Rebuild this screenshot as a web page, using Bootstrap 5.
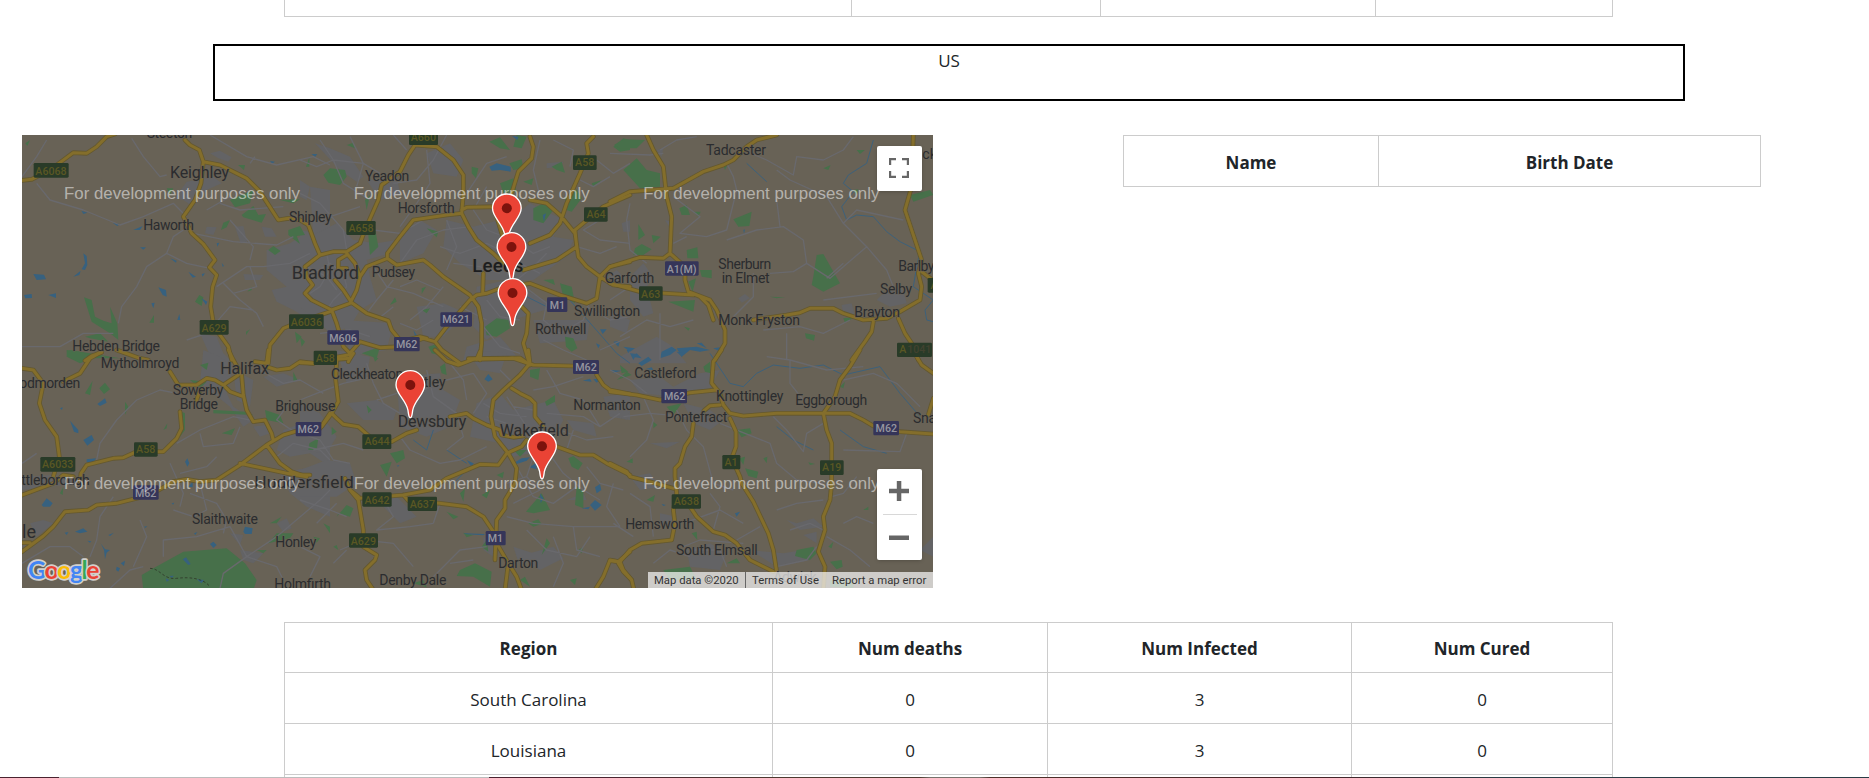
<!DOCTYPE html>
<html lang="en">
<head>
<meta charset="utf-8">
<meta name="viewport" content="width=device-width, initial-scale=1">
<title>Regions</title>
<link href="https://cdn.jsdelivr.net/npm/bootstrap@5.3.0/dist/css/bootstrap.min.css" rel="stylesheet">
<style>
html,body{height:778px;overflow:hidden}
body{font:400 17px/27px "Open Sans","Noto Sans",sans-serif;color:#212529;background:#fff}
.page{height:777px;overflow:hidden;padding-left:28px}
.grid-table{border-collapse:collapse;table-layout:fixed;text-align:center}
.grid-table th,.grid-table td{border:1px solid #ccc;height:51px;padding:3px 12px 0;vertical-align:middle}
.grid-table th{font-weight:700}
.stats{width:1329px;margin:0 auto 0 256px}
.stats tr.lead-row th{height:50px}
.stats.prev td{height:16px;border-top:0}
.region-box{width:1472px;height:57px;margin:27px auto 34px 185px;border:2px solid #000;line-height:27px;padding-top:1px}
.map-box{width:911px;height:453px;margin-left:-6px;overflow:hidden;background:#686256}
.map-box>svg{display:block}
.people{width:638px;margin:0 0 0 190px}
.people th{height:51px}
.map-ctl{background:#fff;border:0;border-radius:2px;width:45px;box-shadow:0 1px 4px -1px rgba(0,0,0,.3);right:11px}
.ctl-full{top:11px;height:45px}
.ctl-zoom{bottom:28px;height:91px}
.map-ctl button{width:45px;height:45px;border:0;background:none;padding:0 1px 0 0}
.map-ctl hr{width:34px;margin:0 auto;border-top:1px solid #d8d8d8;opacity:1}
.attrib{right:0;bottom:0;height:16px;width:285px;background:rgba(245,245,245,.72);font:11.3px/18px Roboto,sans-serif;color:#333;white-space:nowrap}
.attrib span:first-child{width:98px;border-right:1px solid #666;padding-left:6px}
.attrib span:nth-child(2){padding-left:6px;width:86px}
.strip{height:1px;background:linear-gradient(90deg,#4a2330 0 59px,#bcbcbc 59px 489px,#4a2330 489px 600px,#4d3930 780px 920px,#77706a 930px 980px,#4d3029 990px,#462327 1320px,#293c45 1500px)}
.green{fill:#47704a}.water{fill:#37617f}.town{fill:#636365}
.lane{fill:none;stroke:#69696d;stroke-width:4;stroke-linejoin:round}
.stream{fill:none;stroke:#3d617b;stroke-width:3}
.road{fill:none;stroke-linejoin:round;stroke-linecap:round}
.casing{stroke:#64582f;stroke-width:14}
.core{stroke:#846e2b;stroke-width:9}
.names text{font-family:Roboto,sans-serif;font-size:42px;fill:#2b2c2f;stroke:#686256;stroke-width:3;paint-order:stroke}
.shields rect{rx:4px}
.shields text{font:500 32px Roboto,sans-serif;text-anchor:middle}
.sa rect{fill:#293b28}.sa text{fill:#5a5724}
.sm rect{fill:#353559}.sm text{fill:#96959f}
.dev text{font:50.5px "Liberation Sans",Arial,sans-serif;fill:#fff;fill-opacity:.52}
</style>
</head>
<body>
<div class="page">
  <table class="grid-table stats prev">
    <colgroup><col style="width:567px"><col style="width:249px"><col style="width:275px"><col></colgroup>
    <tbody><tr><td></td><td></td><td></td><td></td></tr></tbody>
  </table>
  <div class="region-box text-center">US</div>

  <div class="d-flex align-items-start">
    <div class="map-box position-relative flex-shrink-0">
      <svg width="911" height="453" viewBox="66 45 2733 1359">
        <defs>
          <path id="pin" d="M0,98C-5,98-5,91-7,76C-13,45-43,27-43,0A43,43 0 1 1 43,0C43,27 13,45 7,76C5,91 5,98 0,98Z" fill="#ea4335" stroke="#fff" stroke-width="4"/>
          <g id="roads">
            <path d="M60,182L95,178L150,150L220,98L260,100L290,80L320,50L345,42M555,60L570,75L598,90L610,125L660,135L740,175L780,215L835,300L865,295L900,300M610,125L603,190L585,240L550,290L575,340L610,372L645,420L628,442L650,465L638,500L632,560L642,620L685,680L695,720M990,575L900,605L850,625L810,675L805,730M255,722L275,708L305,697M350,690L420,715"/>
            <path transform="translate(900 0)" d="M0,300L25,315L45,370L60,405L15,440L20,470L38,495L15,520L35,540L95,570L150,550L170,510L180,470L200,440L262,415M345,75L325,105L300,155L245,195L235,240L215,285L195,330L180,370L140,395L100,395L60,405M345,75L410,80L460,120L490,165L490,220L485,280L505,320L530,360L580,400L610,430M485,270L500,262L590,260M485,280L440,285L340,300L300,350L262,400L262,415L290,435L370,420L390,435L430,470L510,525L535,560L545,610L545,670L540,720M140,400L165,430L180,470M140,405L115,420L115,445L140,445M105,480L130,510L155,548L200,580L265,602L275,630L300,660M95,570L110,610L130,680L155,705L145,725M90,715L145,705L180,665L240,683L300,680L370,655L405,665L425,690L480,730M380,655L360,650L300,665M405,665L440,620L510,540L530,525L560,520L600,505L690,490L780,525L860,550L890,535L900,470L930,440L990,425M690,50L700,80L695,115L655,155L635,220M880,50L860,70L865,100L840,160L800,250L780,310L750,345L690,370M990,225L910,260L825,330L830,380L770,420L670,450M690,240L740,250L780,285L825,340L835,410L860,440L900,470L940,495L990,500M550,460L548,520M590,290L605,340L625,400M640,540L665,560L685,580L680,640L670,670L685,720M505,716L660,714L690,735"/>
            <path transform="translate(1830 0)" d="M110,45L130,90L160,140L170,230L185,290L180,400L225,440L225,480L235,515L270,530L295,555L310,600M235,515L300,540L320,570L345,630L345,670L315,720M500,45L440,60L410,80L370,120L340,135L280,155L190,205L60,215L0,245M0,440L90,412L160,415L180,400M0,490L90,515L250,525M430,600L530,585L570,578L600,565L670,565L700,580L760,600L830,595L870,575L930,540L935,500L925,460L935,420L910,345L885,270L905,200L910,45M935,455L980,490M790,605L785,635L765,665L725,720M865,595L885,640L905,670L925,720"/>
            <path transform="translate(0 690)" d="M66,55L100,60L130,100L118,160L135,210L170,260L178,320L160,380M190,95L240,70L270,25L305,5M420,25L445,30M510,65L535,105L590,105L620,85L645,90L670,105L690,125L730,140M685,0L700,30L725,75L730,135L740,180L760,215L795,210L815,250L820,272L800,285M670,105L715,75M805,0L800,40L765,35M800,50L830,60L870,55L900,35L940,40M590,150L600,120M540,185L545,235L530,265L490,305L410,305L370,323L340,325L260,345L243,370L240,395M220,380L190,375L160,400L66,435M66,605L130,558L160,530L195,485L265,480L290,465L350,460L450,435L520,395L560,388L600,395L650,390L720,345L800,285L850,255L900,240L960,235L990,190M800,285L840,340L875,365L920,380M720,340L860,370L920,380M66,578H90"/>
            <path transform="translate(900 690)" d="M160,10L150,25L110,28L107,90L115,155L95,190L65,230M95,190L110,205L130,223L175,230L215,265L275,275L320,250L350,240M0,38L40,40M405,0L440,33L475,45L520,28L640,25L700,45L820,48M540,5L530,28M685,0L690,40L660,75L610,120L580,150L573,200L585,260L625,310L650,355L645,400L615,450L615,475L590,510L585,630M635,115L660,130L690,145L705,160L705,200L730,230M680,270L665,290L620,310L595,345L540,343L500,360L440,385L390,420L310,435L180,445M450,200L500,190L520,205L560,225L600,240L605,255L640,262L670,258M770,290L840,315L880,315L920,340L990,375M890,75L910,105L930,120L990,132M310,435L325,452L420,460L500,470L550,500L580,545M135,385L150,420L175,450L190,540L190,590L230,615L225,630L195,660L200,690L220,720M150,420L175,440M0,375L30,375M590,580L625,640L615,720M625,640L650,680L665,720M990,605L955,635L930,630L910,680L885,720M955,640L970,665L995,690"/>
            <path transform="translate(1830 690)" d="M0,125L80,135L150,150L240,128L320,120M335,0L310,35L305,100L330,130L340,165L360,190L400,198L500,190L640,190L720,190L760,210L790,228L870,245L970,252M330,165L300,167L282,182M250,220L245,260L225,290L210,340L195,355L195,380L200,430L190,480L195,520L185,570L95,580L60,600L30,635L40,660L65,690L72,720M30,635L0,632M360,205L378,245L378,290L365,325L390,380L395,400L430,455L475,550L490,600L500,665M750,0L720,50L690,90L675,140L640,190L650,240L665,280L665,400L660,450L640,500L645,540L625,605L645,650L640,720M0,340L50,365L60,380L100,390L190,415M200,440L240,470L260,500L310,545L345,555L380,580L420,630L490,665M920,20L935,45L970,70M970,145L955,195"/>
          </g>
        </defs>

        <g class="town">
          <path d="M630,100L660,92L695,112L685,125L655,115ZM525,235L560,185L640,170L665,190L620,210L580,260L550,240ZM620,320L650,322L640,345L615,340ZM705,320L730,318L742,368L722,370ZM785,320L815,325L830,350L795,350ZM730,462L790,465L780,480L735,480ZM800,390L870,370L900,350L950,340L990,330L990,590L930,600L880,570L830,545L815,510L860,500L800,450ZM600,640L650,650L670,700L700,730L640,730ZM930,200L990,210V340L940,350Z"/>
          <path transform="translate(900 0)" d="M0,330L50,340L110,310L160,360L230,370L290,360L270,400L200,420L210,470L230,540L180,570L150,620L90,640L40,590L0,560ZM45,70L90,85L150,110L190,170L170,185L120,150ZM200,180L290,170L300,220L240,240ZM0,180L30,200L20,240L0,230ZM300,350L360,300L410,330L370,400L300,430ZM440,300L520,320L640,290L690,250L750,280L790,300L760,350L820,360L800,410L700,480L560,480L480,430L430,380ZM380,100L450,70L490,120L470,170L400,160ZM530,500L620,480L770,560L700,580L640,600L560,660L520,620ZM350,560L430,550L500,580L430,650L370,650ZM130,600L280,610L260,690L150,710ZM740,130L790,125L780,140L740,145ZM910,480L950,450L970,470L940,500ZM700,600L870,600L860,660L720,670ZM500,680L600,650L660,720L490,720Z"/>
          <path transform="translate(1830 0)" d="M35,310L60,300L60,335L40,335ZM140,90L160,85L155,110ZM165,300L185,305L180,325ZM60,470L100,430L130,470L110,500L130,580L100,590L60,540ZM385,535L405,522L420,535L395,548ZM800,540L840,500L880,510L890,550L840,560ZM695,555L725,550L735,590L700,580ZM0,570L60,600L50,640L0,620ZM30,710L140,650L190,680L230,730H30Z"/>
          <path transform="translate(0 690)" d="M610,0L660,20L700,50L680,130L700,170L760,210L730,230L690,170L640,130L600,100ZM700,60L760,90L750,170L710,150ZM760,230L800,225L810,250L780,260ZM850,240L960,200L990,230L990,350L930,310L870,320L830,300ZM840,370L990,340L990,500L920,470L870,430ZM690,550L730,555L720,585ZM830,520L860,505L875,535L850,545ZM720,600L790,610L760,640L730,630ZM90,520L130,510L160,520L110,560ZM66,380L160,375L260,385L240,400L66,420ZM790,80L850,70L900,90L830,110Z"/>
          <path transform="translate(900 690)" d="M110,0L210,20L200,80L140,100ZM290,80L420,70L430,120L480,150L450,230L380,260L300,230ZM0,160L60,190L110,260L80,310L0,300ZM140,160L230,150L290,180L280,210L190,210ZM0,360L80,330L150,340L170,400L110,440L0,440ZM530,160L600,130L640,180L760,150L790,210L740,300L640,320L600,280L510,260ZM800,210L880,220L890,260L820,240ZM500,0L620,10L600,70L540,60ZM220,440L280,430L350,500L300,520ZM550,560L600,590L580,620L550,600ZM650,620L760,590L790,625L720,660ZM910,140L990,130V210L930,200ZM800,450L850,430L860,450ZM640,590L700,610L660,650Z"/>
          <path transform="translate(1830 690)" d="M60,90L150,80L190,110L270,70L330,60L300,115L200,140L90,130ZM0,150L60,180L50,210L0,190ZM120,280L210,275L170,295ZM220,160L300,180L340,210L300,240L250,220ZM230,600L300,580L350,610L330,660L240,650ZM420,600L520,610L580,600L600,630L500,650ZM60,380L120,370L150,410L90,420ZM530,510L560,520L610,505L640,530L570,540ZM150,490L200,500L190,530L150,520ZM580,555L620,545L620,580ZM930,600L970,560V620Z"/>
        </g>

        <g class="green">
          <path d="M76,70L90,60L82,78ZM714,135L735,135L732,150ZM918,140L928,112V140ZM725,285L760,258L775,285L798,282L785,308L730,292ZM663,330L670,308L690,300L680,322ZM865,330L900,318L915,345L890,348L900,372L865,345ZM805,390L820,378L842,393L825,405ZM585,545L598,525L610,532L605,558ZM252,532L275,540L285,590L310,602L335,610L330,560L352,610L355,660L330,640L275,605ZM255,650L300,640L325,665L270,655ZM690,240L760,210L750,250L705,262ZM840,240L900,238L880,250ZM738,635L750,628L738,645ZM885,635L905,650L890,670ZM448,608L462,585L462,608ZM500,205L520,205L510,225ZM742,515L755,500V510ZM208,690L270,700L360,715L220,715Z"/>
          <path transform="translate(900 0)" d="M70,165L90,145L135,150L140,170L120,195L85,188ZM140,75L160,68L165,85ZM568,65L600,52L630,90L600,85ZM640,80L665,85L680,50L650,45ZM628,130L665,118L670,145L640,150ZM515,140L535,145L528,175L515,160ZM755,140L785,125L795,158L770,150ZM795,235L830,208L845,235L815,275L800,270ZM700,265L730,250L760,270L730,310L700,300ZM670,185L700,175L695,195ZM205,345L225,325L235,380L210,405ZM380,325L415,335L410,352ZM555,620L590,595L625,600L630,625L590,650L560,645ZM780,490L815,500L825,550L790,530ZM795,650L820,655L832,685L815,695L798,680ZM270,555L285,532L290,545ZM365,505L378,500L365,522ZM185,700L240,680L230,715ZM940,80L970,55L990,60L990,90L960,95ZM730,480L760,478L765,495ZM875,190L905,180L880,200ZM365,570L390,565L380,580ZM385,680L410,672L415,705L395,700ZM0,650L15,665L5,680ZM195,240L210,225L200,270ZM600,190L640,175L650,215L610,220Z"/>
          <path transform="translate(1830 0)" d="M12,75L40,58L105,60L80,85L30,85ZM40,150L80,115L110,150L150,160L150,200L90,205ZM85,312L105,345L85,360ZM75,385L95,372L125,388L100,405L70,405ZM125,345L152,350L130,370ZM230,390L262,382L265,415L232,415ZM270,450L305,450V475L275,470ZM208,265L230,255L240,285L215,285ZM370,298L425,275L418,318L385,320ZM610,470L620,405L640,402L690,490L640,515L605,495ZM585,640L615,645L612,662L588,655ZM175,545L255,540L250,575ZM235,485L258,475L248,515ZM900,225L960,210L970,225L910,245ZM640,145L662,135L655,150ZM700,595L735,590L705,608ZM730,210L745,208L740,225ZM740,90L765,90L750,102ZM340,135L355,130L345,150ZM250,275L272,275L265,290ZM222,620L240,625L235,632ZM480,530L525,532L500,535Z"/>
          <path transform="translate(0 690)" d="M425,675L460,655L550,605L680,595L735,640L770,690L760,720H430ZM298,115L315,98L330,118L312,132ZM200,0L240,5L290,20L240,40L200,20ZM640,180L740,185L760,195L640,190ZM795,180L840,195L850,220L800,210ZM545,185L555,190V240L540,260ZM570,90L620,95L600,115ZM665,250L705,235L695,255ZM600,45L625,38L620,60ZM375,155L385,170L375,195ZM490,240L502,220L500,235ZM928,280L955,265L950,300L925,300ZM805,580L830,550L880,550L870,565ZM180,430L190,410L188,435ZM810,520L845,500L830,520ZM940,560L960,565L950,578ZM970,520L990,530V550ZM770,600L800,600L790,610ZM255,130L278,92L270,135ZM880,65L892,90L880,95Z"/>
          <path transform="translate(900 690)" d="M420,50L435,40L440,75L425,70ZM690,60L720,55L715,90L690,80ZM735,155L765,135L765,155L740,168ZM805,325L820,318L848,340L835,360L815,350ZM678,485L725,430L750,480L700,490ZM830,410L850,425L850,475L825,465ZM685,520L715,508L725,522L700,530ZM725,615L740,565L750,580ZM480,660L525,640L575,665L570,710L520,680L470,678ZM110,500L140,465L160,475L150,500L115,490ZM270,310L310,300L315,325L290,340ZM240,345L275,335L260,380ZM440,485L475,500L460,508ZM480,430L495,415L490,455ZM490,548L520,555L500,562ZM545,590L560,570L565,605ZM835,600L850,590L845,610ZM660,690L675,680L690,710ZM340,700L370,690L380,712ZM590,375L612,365L608,385ZM200,165L215,180L205,190ZM220,20L235,25L225,35ZM960,45L985,65L965,70ZM545,435L570,420L560,445ZM640,300L680,300L660,320ZM810,690L830,685L825,705ZM100,590L110,585L115,600ZM95,230L110,245L95,255Z"/>
          <path transform="translate(1830 690)" d="M280,50L300,35L302,70L285,65ZM380,240L420,235L425,250L395,262ZM405,355L445,365L440,385L415,378ZM388,325L405,320L400,345ZM460,325L472,320L470,340ZM560,600L610,590L620,610L600,630L555,618ZM655,590L670,575L665,595ZM660,635L695,630L698,650L680,658ZM170,170L215,160L190,195ZM245,550L260,545L262,570ZM20,90L50,65L65,75ZM690,110L705,95L700,115ZM160,660L240,650L260,690L180,690ZM760,480L775,470V480ZM50,335L68,325V340ZM130,215L142,225L130,235ZM350,640L380,625L390,640ZM660,690L730,690L730,715L660,710ZM110,450L135,435L130,455ZM595,337L615,342L600,345Z"/>
        </g>

        <g class="water">
          <path d="M100,462L132,464L138,478L110,480ZM72,525L95,522L96,534L76,535ZM145,525L168,520V534ZM250,400L260,408L262,435L255,450L245,448L255,430ZM220,470L242,452L238,465ZM244,272L262,278L250,282ZM338,308L360,312L352,318ZM400,330L428,318L420,330ZM420,382L438,382L430,389ZM510,415L530,422L528,428ZM565,455L588,470L578,473ZM605,462L615,460L608,470ZM475,502L498,510L500,530L488,525ZM454,550L464,548L460,565ZM538,582L541,600L532,600ZM604,535L622,545L618,555ZM650,370L658,368L652,380ZM665,428L672,438L668,440ZM810,123L825,125L816,131ZM935,102L952,103L945,110ZM320,228L335,230L325,235Z"/>
          <path transform="translate(900 0)" d="M568,140L590,130L632,140L632,155L600,150L575,152ZM636,48L655,50L652,60ZM36,102L50,102L45,110ZM900,628L920,628L908,642ZM728,285L738,280L732,305ZM340,630L350,645L345,648ZM980,690L990,688L985,700ZM888,670L900,675L895,685Z"/>
          <path transform="translate(1830 0)" d="M10,665L30,662L25,680ZM40,680L75,685L60,695ZM155,695L185,680L200,690L180,705L150,715ZM200,685L260,680L300,690L270,695L240,690L215,710ZM65,710L80,700L95,715ZM400,330L405,328L402,342ZM260,670L275,668L290,685ZM310,685L330,682L325,692Z"/>
          <path transform="translate(0 690)" d="M292,162L315,145L320,158L300,168ZM210,212L235,240L235,250L222,245ZM250,270L275,255L282,270L262,287ZM260,328L288,325L280,338L260,337ZM125,465L140,445L158,460L150,470L130,470ZM180,175L188,172L186,180ZM555,335L562,325L568,340L562,350ZM730,545L735,530L758,535L755,552L735,552ZM630,582L640,575L650,585L640,594ZM548,628L558,622L572,642L565,645ZM350,650L360,655L355,665L348,660ZM362,640L375,632L372,648ZM194,548L205,546L200,555ZM225,545L250,535L262,545L240,550ZM302,580L315,598L330,600L320,608L315,628L312,600ZM325,555L342,548L330,558ZM497,685L508,690L500,695ZM565,410L578,395L578,412ZM262,572L274,574L270,578ZM582,550L592,546L586,555ZM515,460L523,458L519,464ZM432,530L442,528L436,534ZM590,688L612,690L605,700ZM508,678L522,677L515,684Z"/>
          <path transform="translate(900 690)" d="M553,88L565,72L578,88L565,95ZM640,340L665,325L690,322L680,332L650,342ZM687,352L708,340L710,358ZM885,412L900,402L904,420L890,430ZM870,465L885,450L905,465L885,482ZM845,475L870,470L865,478ZM720,430L730,445L722,460ZM848,92L870,86L875,95ZM880,88L905,85L890,98ZM500,330L520,340L515,350ZM705,325L715,320L710,330ZM930,60L965,62L940,68ZM290,347L298,345L294,350ZM490,550L555,552L550,556L500,553Z"/>
          <path transform="translate(1830 690)" d="M85,40L115,20L125,30L95,48ZM60,10L80,12L70,30ZM105,58L125,52L130,60ZM200,5L225,8L215,20ZM155,462L168,465L160,468ZM375,490L390,485L380,500Z"/>
        </g>

        <g class="stream">
          <path d="M2620,60L2600,130L2545,165L2530,190L2560,215L2525,260L2540,300L2570,285L2620,290L2660,335L2700,365L2760,395L2750,440L2740,500L2800,540L2775,570L2780,600L2800,605M1560,520L1640,560L1700,530L1780,620L1850,700L1890,730M2130,700L2190,790L2230,800L2270,760L2320,735L2400,745L2470,735L2530,765L2640,740L2700,820L2760,890M2240,130L2300,185M2330,920L2380,960L2440,990M2520,930L2590,980L2660,1000M1300,930L1280,990L1240,960M1420,1030L1400,1050L1360,1090M1340,990L1400,1030"/>
        </g>

        <g class="lane">
          <path d="M66,170L110,110L140,60M110,190L150,240L250,270L360,315L430,290L520,250L560,290M395,55L430,110L480,170L500,165M66,680L180,680L250,640L340,640M355,610L365,560L410,500L440,440L500,400L520,350L550,330M500,400L560,430L630,445M630,45L740,110L830,135L940,110L990,135M560,660L620,640L690,560L760,570M650,500L740,440L790,440L870,430L930,400M580,340L700,365L830,375L880,350M670,490L720,540L770,580L790,620M660,250L720,270L850,260M620,270L690,230M765,110L750,130M690,300L760,380L750,420M750,440L770,500L700,520"/>
          <path transform="translate(900 0)" d="M0,120L50,140L100,120L190,130L240,160M60,60L100,120L130,190L210,240M150,50L190,130L170,200M280,45L320,90M440,45L400,120L350,180L280,190M380,90L390,190L350,250L300,320M0,220L60,250L130,330L140,390M180,260L120,280L60,300M220,330L300,340L370,300M300,430L350,360L430,330L510,320M420,380L480,400L560,370L620,400M460,430L540,440L600,460M440,300L470,380L440,450M560,200L520,270L560,330L640,360L700,400L750,380M620,110L560,130L500,220M720,60L700,150L720,230M760,60L820,90L810,140M890,120L940,160L990,130M840,180L880,200L930,170M900,300L850,330L900,360L990,370M830,380L900,400L950,380M650,480L700,440L740,400M660,490L740,550L730,600L780,640L850,600L870,540M560,540L600,590L660,600M220,440L260,500L340,520L430,560M280,480L230,540L200,580M330,600L380,560L430,500M60,600L100,540L140,500M20,440L80,470L110,510M300,610L350,630L400,600M550,620L600,680L660,700M860,560L930,600L990,590M730,660L790,690L860,720M60,640L150,630L210,650M900,690L990,650M40,460L90,430L130,460L140,500M80,400L90,450L60,500L30,520M300,500L350,480L420,510M230,600L280,560M480,560L560,600M600,440L660,430L720,460"/>
          <path transform="translate(1830 0)" d="M0,100L120,105L160,100M60,250L50,300L60,390L110,430M150,90L200,60L260,50M190,230L270,290L210,340L290,350L350,330L380,210L370,170L350,130M190,370L230,350M350,360L440,330L520,320L580,360L590,430L660,475L770,380L700,310L650,230L540,180L500,150M500,240L510,320M400,90L470,120L550,165L560,110L640,120L700,90L730,50M700,310L740,270L880,300M590,430L550,455L480,460M770,380L830,450L850,500M430,460L430,530L370,590M460,630L570,620L640,640L720,600M530,640L530,720M700,430L650,475M150,580L150,720M640,540L800,520M60,500L0,540M250,600L180,620L110,600L30,650"/>
          <path transform="translate(0 690)" d="M290,330L300,280L350,210L410,150L480,120L530,130M530,280L600,240L700,200L750,210M540,370L620,350L650,320M66,340L110,310M340,440L300,500L290,570L270,620M600,400L620,480L580,500L520,480M490,620L490,570L590,560L690,530L740,620M740,620L670,670L660,715M66,640L150,590L210,590L250,620M740,620L830,560L960,450L990,420M740,620L830,650L850,690M760,50L850,100L900,90L970,130M830,320L880,280L960,300L990,330M510,340L550,430L540,470M860,170L830,210L890,250M420,510L440,560L400,650M330,715L390,660L430,650M570,430L650,460L680,510L670,550M600,250L610,290L700,280L720,230"/>
          <path transform="translate(900 690)" d="M0,150L50,130L130,100L220,80M200,40L220,100L250,160L300,190M0,250L60,270L100,330L150,340M40,300L130,280L190,300M230,150L290,130L370,120L440,90L520,70M380,60L400,140L470,190L490,260L440,300M300,260L330,300L420,340L480,330L560,290M520,70L560,130L520,190M450,40L490,90L500,150M600,60L640,100M740,60L780,130L850,150L900,230M700,120L760,110L850,80M740,190L850,200L900,230L960,190M800,300L820,240M740,300L790,370L850,420L900,450M700,320L680,380L720,420L640,460M680,380L620,400M650,350L700,440L760,460L830,410M240,430L280,500L230,540L330,530L400,520M120,600L190,570L280,580L340,650M100,640L140,600M400,680L480,600L560,590M420,460L400,520M450,640L520,630M620,500L700,520L820,530L960,530M680,540L740,600L830,620L870,560M760,560L790,640L760,710M820,530L830,600L900,620M940,400L920,470L960,530M0,450L90,480L140,500M50,520L110,460M0,590L60,620L30,680M640,170L700,180M550,160L600,190L680,200M560,200L620,220M620,140L680,230M860,350L900,400L970,420M720,250L780,240L860,270L940,260"/>
          <path transform="translate(1830 690)" d="M0,60L60,90L110,130M40,200L120,190L230,200M100,140L130,210L110,270L60,320M200,180L230,240L280,290L310,400L370,420M330,220L480,280L500,340L560,390L640,400M490,200L530,240L580,305L590,250L640,220M700,300L870,305L890,250M470,20L540,30L650,60L760,50M540,30L540,100L580,150M700,90L790,70L860,100L930,170M220,520L330,480L400,520M220,590L270,570L400,580M310,540L330,470L300,430M380,570L450,530M500,480L560,460L640,450M650,560L720,600L780,650M700,520L740,500L790,520M740,380L700,430L665,440M60,430L120,470L130,560M70,560L10,520M540,540L600,520L640,540M500,650L590,630L620,590M250,600L330,600L350,650M130,640L180,600L240,620"/>
        </g>
        <path d="M450,1345C480,1345 490,1380 530,1375S610,1375 630,1400" fill="none" stroke="#33422f" stroke-width="3" stroke-dasharray="8 6"/>

        <use href="#roads" class="road casing"/>
        <use href="#roads" class="road core"/>

        <g class="shields sa">
          <g><rect x="101" y="129" width="105" height="44"/><text x="153" y="164">A6068</text></g>
          <g><rect x="599" y="600" width="87" height="44"/><text x="642" y="635">A629</text></g>
          <g><rect x="867" y="583" width="104" height="44"/><text x="919" y="617">A6036</text></g>
          <g><rect x="1227" y="30" width="87" height="45"/><text x="1270" y="63">A660</text></g>
          <g><rect x="1039" y="303" width="88" height="42"/><text x="1083" y="336">A658</text></g>
          <g><rect x="1719" y="106" width="71" height="44"/><text x="1754" y="139">A58</text></g>
          <g><rect x="1752" y="262" width="71" height="43"/><text x="1788" y="294">A64</text></g>
          <g><rect x="1917" y="499" width="71" height="43"/><text x="1952" y="533">A63</text></g>
          <g><rect x="2783" y="474" width="60" height="44"/><text x="2802" y="508">A</text></g>
          <g><rect x="2691" y="668" width="105" height="43"/><text x="2708" y="699">A</text><text x="2758" y="699" style="fill:#41422f">1041</text></g>
          <g><rect x="941" y="692" width="70" height="43"/><text x="976" y="725">A58</text></g>
          <g><rect x="402" y="967" width="71" height="43"/><text x="437" y="999">A58</text></g>
          <g><rect x="121" y="1011" width="105" height="44"/><text x="173" y="1044">A6033</text></g>
          <g><rect x="1087" y="943" width="87" height="44"/><text x="1131" y="976">A644</text></g>
          <g><rect x="1087" y="1117" width="88" height="43"/><text x="1131" y="1151">A642</text></g>
          <g><rect x="1223" y="1130" width="88" height="43"/><text x="1267" y="1163">A637</text></g>
          <g><rect x="1047" y="1240" width="87" height="43"/><text x="1090" y="1274">A629</text></g>
          <g><rect x="2167" y="1005" width="54" height="43"/><text x="2193" y="1039">A1</text></g>
          <g><rect x="2460" y="1021" width="71" height="44"/><text x="2495" y="1054">A19</text></g>
          <g><rect x="2015" y="1123" width="88" height="43"/><text x="2059" y="1156">A638</text></g>
        </g>
        <g class="shields sm">
          <g><rect x="1321" y="577" width="95" height="43"/><text x="1368" y="610">M621</text></g>
          <g><rect x="1641" y="532" width="61" height="44"/><text x="1672" y="566">M1</text></g>
          <g><rect x="982" y="631" width="95" height="43"/><text x="1029" y="665">M606</text></g>
          <g><rect x="1182" y="651" width="77" height="43"/><text x="1220" y="683">M62</text></g>
          <g><rect x="1995" y="424" width="101" height="43"/><text x="2045" y="458">A1(M)</text></g>
          <g><rect x="887" y="906" width="77" height="43"/><text x="925" y="938">M62</text></g>
          <g><rect x="399" y="1096" width="77" height="43"/><text x="437" y="1130">M62</text></g>
          <g><rect x="1457" y="1233" width="60" height="43"/><text x="1486" y="1267">M1</text></g>
          <g><rect x="1719" y="720" width="78" height="42"/><text x="1758" y="752">M62</text></g>
          <g><rect x="1984" y="807" width="77" height="43"/><text x="2024" y="840">M62</text></g>
          <g><rect x="2620" y="903" width="77" height="43"/><text x="2659" y="937">M62</text></g>
        </g>

        <g class="names">
          <text x="440" y="54" textLength="137">Steeton</text>
          <text x="510" y="173" textLength="177" style="font-size:48px">Keighley</text>
          <text x="430" y="330" textLength="152">Haworth</text>
          <text x="867" y="306" textLength="128">Shipley</text>
          <text x="875" y="476" textLength="202" style="font-size:54px">Bradford</text>
          <text x="217" y="693" textLength="263">Hebden Bridge</text>
          <text x="1095" y="184" textLength="133">Yeadon</text>
          <text x="1193" y="279" textLength="171">Horsforth</text>
          <text x="1115" y="472" textLength="130">Pudsey</text>
          <text x="1417" y="457" textLength="153" style="font-size:56px;font-weight:500;fill:#1c1d20">Leeds</text>
          <text x="1814" y="489" textLength="149">Garforth</text>
          <text x="1722" y="588" textLength="199">Swillington</text>
          <text x="1605" y="641" textLength="154">Rothwell</text>
          <text x="2118" y="106" textLength="180">Tadcaster</text>
          <text x="2155" y="448" textLength="159">Sherburn</text>
          <text x="2165" y="489" textLength="144">in Elmet</text>
          <text x="2155" y="615" textLength="245">Monk Fryston</text>
          <text x="2563" y="590" textLength="137">Brayton</text>
          <text x="2640" y="523" textLength="96">Selby</text>
          <text x="2695" y="452" textLength="108">Barlby</text>
          <text x="2767" y="116">ck</text>
          <text x="302" y="743" textLength="236">Mytholmroyd</text>
          <text x="58" y="804" textLength="183">odmorden</text>
          <text x="661" y="763" textLength="146" style="font-size:48px">Halifax</text>
          <text x="518" y="825" textLength="152">Sowerby</text>
          <text x="539" y="866" textLength="115">Bridge</text>
          <text x="826" y="873" textLength="180">Brighouse</text>
          <text x="64" y="1096" textLength="205">ttleborough</text>
          <text x="763" y="1105" textLength="298" style="font-size:52px">Huddersfield</text>
          <text x="576" y="1213" textLength="198">Slaithwaite</text>
          <text x="826" y="1281" textLength="123">Honley</text>
          <text x="823" y="1406" textLength="170">Holmfirth</text>
          <text x="66" y="1253" style="font-size:54px">le</text>
          <text x="993" y="777" textLength="217">Cleckheaton</text>
          <text x="1222" y="802" textLength="115">Batley</text>
          <text x="1193" y="921" textLength="206" style="font-size:48px">Dewsbury</text>
          <text x="1499" y="947" textLength="207" style="font-size:48px">Wakefield</text>
          <text x="1720" y="869" textLength="202">Normanton</text>
          <text x="1495" y="1345" textLength="120">Darton</text>
          <text x="1138" y="1396" textLength="201">Denby Dale</text>
          <text x="1903" y="774" textLength="187">Castleford</text>
          <text x="2148" y="842" textLength="202">Knottingley</text>
          <text x="1995" y="907" textLength="187">Pontefract</text>
          <text x="2386" y="856" textLength="216">Eggborough</text>
          <text x="2739" y="910" textLength="114">Snaith</text>
          <text x="1876" y="1226" textLength="207">Hemsworth</text>
          <text x="2028" y="1305" textLength="245">South Elmsall</text>
          <text x="2320" y="1386" textLength="130">Adwick</text>
        </g>

        <g class="dev">
          <text x="192" y="238" textLength="708">For development purposes only</text>
          <text x="1061" y="238" textLength="708">For development purposes only</text>
          <text x="1930" y="238" textLength="708">For development purposes only</text>
          <text x="192" y="1107" textLength="708">For development purposes only</text>
          <text x="1061" y="1107" textLength="708">For development purposes only</text>
          <text x="1930" y="1107" textLength="708">For development purposes only</text>
        </g>

        <g fill="#7c130d">
          <use href="#pin" x="1520.500" y="265"/><circle cx="1520.500" cy="265" r="15"/>
          <use href="#pin" x="1534.500" y="381"/><circle cx="1534.500" cy="381" r="15"/>
          <use href="#pin" x="1537.500" y="519"/><circle cx="1537.500" cy="519" r="15"/>
          <use href="#pin" x="1231" y="795"/><circle cx="1231" cy="795" r="15"/>
          <use href="#pin" x="1626" y="979"/><circle cx="1626" cy="979" r="15"/>
        </g>

        <text x="84" y="1376" textLength="214" style="font:700 74px Lato,sans-serif;paint-order:stroke;stroke:#d2d0cc;stroke-width:10;stroke-linejoin:round"><tspan fill="#4285f4">G</tspan><tspan fill="#ea4335">o</tspan><tspan fill="#fbbc05">o</tspan><tspan fill="#4285f4">g</tspan><tspan fill="#34a853">l</tspan><tspan fill="#ea4335">e</tspan></text>
      </svg>

      <div class="map-ctl ctl-full position-absolute">
        <button type="button" class="d-flex align-items-center justify-content-center" aria-label="Toggle fullscreen"><svg width="20" height="20" viewBox="0 0 20 20" fill="none" stroke="#666" stroke-width="2.200"><path d="M1.100,7V1.100H7M13,1.100H18.900V7M18.900,13V18.900H13M7,18.900H1.100V13"/></svg></button>
      </div>
      <div class="map-ctl ctl-zoom position-absolute">
        <button type="button" class="d-flex align-items-center justify-content-center" aria-label="Zoom in"><svg width="20" height="20" viewBox="0 0 20 20"><path d="M7.800,0H12.300V7.800H20V12.300H12.300V20H7.800V12.300H0V7.800H7.800Z" fill="#666"/></svg></button>
        <hr>
        <button type="button" class="d-flex align-items-center justify-content-center" aria-label="Zoom out"><svg width="20" height="20" viewBox="0 0 20 20"><path d="M0,8.500H20V13H0Z" fill="#666"/></svg></button>
      </div>
      <div class="attrib position-absolute d-flex"><span>Map data ©2020</span><span>Terms of Use</span><span>Report a map error</span></div>
    </div>

    <table class="grid-table people">
      <colgroup><col style="width:255px"><col></colgroup>
      <thead><tr><th>Name</th><th>Birth Date</th></tr></thead>
    </table>
  </div>

  <table class="grid-table stats region-table" style="margin-top:34px">
    <colgroup><col style="width:488px"><col style="width:275px"><col style="width:304px"><col></colgroup>
    <thead><tr class="lead-row"><th>Region</th><th>Num deaths</th><th>Num Infected</th><th>Num Cured</th></tr></thead>
    <tbody>
      <tr><td>South Carolina</td><td>0</td><td>3</td><td>0</td></tr>
      <tr><td>Louisiana</td><td>0</td><td>3</td><td>0</td></tr>
      <tr><td></td><td></td><td></td><td></td></tr>
    </tbody>
  </table>
</div>
<div class="strip"></div>
<script src="https://cdn.jsdelivr.net/npm/bootstrap@5.3.0/dist/js/bootstrap.bundle.min.js"></script>
</body>
</html>
